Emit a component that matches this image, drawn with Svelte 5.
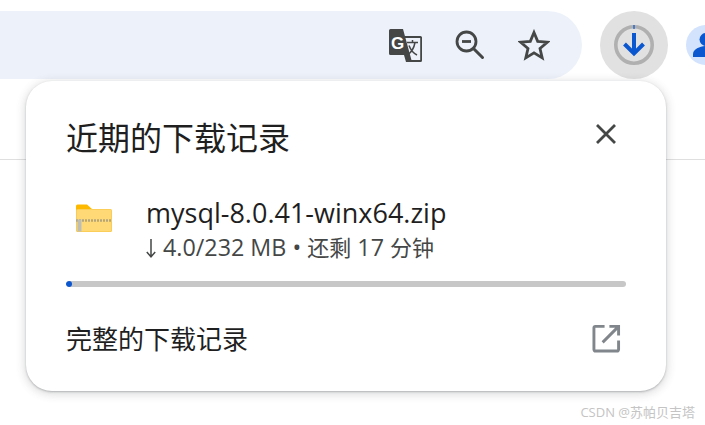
<script>
	const fileName = 'mysql-8.0.41-winx64.zip';
	const progress = 1; // percent, the bar only just started
</script>

<div class="page">
	<header class="toolbar">
		<div class="omnibox">
			<svg class="icon" viewBox="0 0 33 33" width="33" height="33">
				<path d="M0 1.500A1.500 1.500 0 0 1 1.500 0H14l9 33h-6l-2-7H1.500A1.500 1.500 0 0 1 0 24.500z" fill="#444746" />
				<path d="M16 8h15.500a.6.6 0 0 1 .6.6v22.800a.6.6 0 0 1-.6.6H20" fill="none" stroke="#444746" stroke-width="1.800" />
				<text x="2" y="19.500" class="g">G</text>
				<path d="M18 13.500h11M23.500 11v2.500M19 25.500c3.500-2.500 6-6.500 7-12M20 16.500c1.500 4 4 7.500 8 9.500" fill="none" stroke="#444746" stroke-width="1.500" />
			</svg>
			<svg class="icon" viewBox="0 0 32 32" width="32" height="32">
				<circle cx="12.500" cy="12.500" r="9.500" fill="none" stroke="#444746" stroke-width="2.800" />
				<path d="M19.500 19.500l9 9" stroke="#444746" stroke-width="3" stroke-linecap="round" />
				<path d="M8 12.500h9" stroke="#444746" stroke-width="2.800" />
			</svg>
			<svg class="icon" viewBox="0 0 32 32" width="32" height="32">
				<path d="M16 3.500l3.700 8.900 9.600.8-7.300 6.300 2.200 9.400L16 23.900l-8.200 5 2.200-9.400-7.300-6.300 9.600-.8z" fill="none" stroke="#444746" stroke-width="2.800" />
			</svg>
		</div>
		<div class="download">
			<svg viewBox="0 0 42 42" width="42" height="42">
				<circle cx="21" cy="21" r="18.200" fill="none" stroke="#b0b0b0" stroke-width="3.600" />
				<path d="M21 1v4" stroke="#0b57d0" stroke-width="1.200" />
				<path d="M21 9v20M11.500 20L21 29.500 30.500 20" fill="none" stroke="#0b57d0" stroke-width="4" />
			</svg>
		</div>
		<div class="avatar">
			<svg viewBox="0 0 40 40" width="40" height="40">
				<circle cx="20" cy="14.500" r="6.500" fill="#0b57d0" />
				<path d="M7 32v-3c0-5 8-8 13-8s13 3 13 8v3z" fill="#0b57d0" />
			</svg>
		</div>
	</header>

	<div class="divider"></div>

	<section class="popup">
		<div class="popup-head">
			<h2>近期的下载记录</h2>
			<svg class="close" viewBox="0 0 22 22" width="22" height="22">
				<path d="M2 2l18 18M20 2L2 20" stroke="#444746" stroke-width="2.800" />
			</svg>
		</div>

		<div class="item">
			<svg class="folder" viewBox="0 0 36 28" width="36" height="28">
				<path d="M0 2A1.500 1.500 0 0 1 1.500.5h9.500L16 5v4H0z" fill="#fdb900" />
				<rect x="0" y="5" width="36" height="23" rx="1.500" fill="#f9ca4f" />
				<rect x="0.800" y="5.800" width="34.400" height="21.400" rx="1" fill="#fed975" />
				<path d="M0 16.500h36" stroke="#b5a57a" stroke-width="2.400" stroke-dasharray="2 1" />
				<rect x="1.500" y="15.500" width="4" height="12" fill="#bdbdb8" />
			</svg>
			<div class="item-text">
				<div class="name">{fileName}</div>
				<div class="status">
					<svg class="arrow" viewBox="0 0 10 19" width="10" height="19">
						<path d="M5 0v17.500M.8 13L5 17.800 9.200 13" fill="none" stroke="#444746" stroke-width="1.500" />
					</svg>
					4.0/232 MB • <span class="cjk">还剩</span> 17 <span class="cjk">分钟</span>
				</div>
			</div>
		</div>

		<div class="track">
			<div class="fill" style="width: {progress}%"></div>
		</div>

		<div class="popup-foot">
			<span>完整的下载记录</span>
			<svg class="external" viewBox="0 0 30 30" width="29" height="29">
				<path d="M13 2.500H3.500a1.500 1.500 0 0 0-1.500 1.500v22.500a1.500 1.500 0 0 0 1.500 1.500H26a1.500 1.500 0 0 0 1.500-1.500V17" fill="none" stroke="#80868b" stroke-width="3" />
				<path d="M18 2.500h9.500V12M27 3L11 19" fill="none" stroke="#80868b" stroke-width="3" />
			</svg>
		</div>
	</section>

	<div class="watermark">CSDN @苏帕贝吉塔</div>
</div>

<style>
	:global(body) {
		background: #fff;
		overflow: hidden;
	}
	.page {
		position: relative;
		width: 705px;
		height: 425px;
		overflow: hidden;
		font-family: "Open Sans", "Noto Sans CJK SC", sans-serif;
		color: #1f1f1f;
	}
	.toolbar {
		display: flex;
		align-items: center;
		height: 68px;
		padding-top: 11px;
	}
	.omnibox {
		flex: none;
		display: flex;
		align-items: center;
		justify-content: flex-end;
		gap: 32px;
		width: 582px;
		height: 68px;
		padding-right: 32px;
		box-sizing: border-box;
		background: #edf2fa;
		border-radius: 0 34px 34px 0;
	}
	.icon {
		display: block;
		flex: none;
	}
	.g {
		font-family: "Liberation Sans", sans-serif;
		font-size: 17px;
		font-weight: 700;
		fill: #fff;
	}
	.download {
		flex: none;
		display: flex;
		align-items: center;
		justify-content: center;
		width: 68px;
		height: 68px;
		margin-left: 18px;
		border-radius: 50%;
		background: #e1e1e1;
	}
	.avatar {
		flex: none;
		width: 40px;
		height: 40px;
		margin-left: 18px;
		border-radius: 50%;
		background: #d3e3fd;
		overflow: hidden;
	}
	.divider {
		height: 1px;
		margin-top: 80px;
		background: #dfdfdf;
	}
	.popup {
		position: absolute;
		left: 26px;
		top: 81px;
		width: 640px;
		height: 310px;
		box-sizing: border-box;
		padding: 0 40px;
		background: #fff;
		border-radius: 26px;
		box-shadow: 0 1px 2px rgba(60, 64, 67, 0.3), 0 2px 8px 2px rgba(60, 64, 67, 0.16);
	}
	.popup-head {
		display: flex;
		align-items: center;
		justify-content: space-between;
		height: 115px;
		padding-right: 9px;
		padding-bottom: 2px;
		box-sizing: border-box;
	}
	h2 {
		margin: 0;
		font-size: 32px;
		font-weight: 400;
		line-height: 40px;
	}
	.close {
		margin-bottom: 8px;
	}
	.item {
		display: flex;
		align-items: center;
		gap: 35px;
		margin-left: 10px;
	}
	.folder {
		flex: none;
		margin-bottom: 23px;
	}
	.item-text {
		display: flex;
		flex-direction: column;
	}
	.name {
		font-size: 27px;
		line-height: 36px;
		margin-left: -1px;
		margin-top: -1px;
	}
	.status {
		font-size: 23.3px;
		line-height: 31px;
		color: #444746;
		margin-left: -1px;
		margin-top: 1px;
	}
	.arrow {
		margin-right: 1px;
		vertical-align: -2px;
	}
	.cjk {
		font-size: 22px;
	}
	.track {
		height: 6px;
		margin-top: 18px;
		border-radius: 3px;
		background: #c7c7c7;
		overflow: hidden;
	}
	.fill {
		height: 100%;
		min-width: 6px;
		border-radius: 3px;
		background: #0b57d0;
	}
	.popup-foot {
		display: flex;
		align-items: center;
		justify-content: space-between;
		margin-top: 34px;
		padding-right: 5px;
		font-size: 26px;
		line-height: 36px;
	}
	.external {
		margin-bottom: 2px;
	}
	.watermark {
		position: absolute;
		right: 10px;
		bottom: 5px;
		font-size: 13px;
		line-height: 16px;
		color: #c4c4c4;
	}
</style>
